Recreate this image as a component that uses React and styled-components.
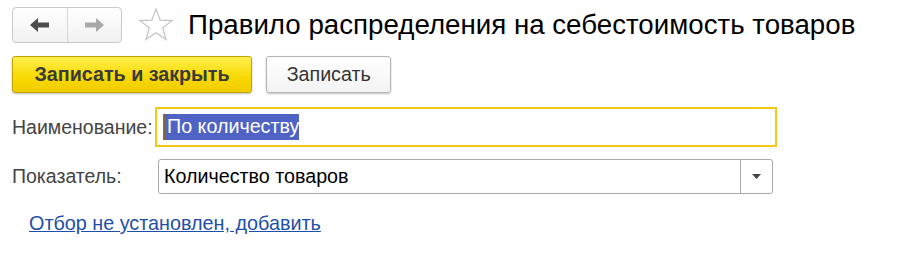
import React from "react";
import styled, { createGlobalStyle } from "styled-components";

const Global = createGlobalStyle`
  html, body { margin: 0; padding: 0; background: #fff; }
  body { font-family: "Liberation Sans", Arial, sans-serif; color: #333; }
`;

const Page = styled.div`
  width: 920px;
  height: 266px;
  box-sizing: border-box;
  padding: 7px 0 0 12px;
  display: flex;
  flex-direction: column;
`;

const Header = styled.div`
  display: flex;
  align-items: center;
  height: 36px;
`;

const NavGroup = styled.div`
  display: flex;
  width: 110px;
  height: 36px;
  box-sizing: border-box;
  border: 1px solid #c9c9c9;
  border-radius: 4px;
  background: linear-gradient(#ffffff, #f1f1f1);
  overflow: hidden;
`;

const NavBtn = styled.div`
  flex: 1;
  display: flex;
  align-items: center;
  justify-content: center;
  & + & { border-left: 1px solid #d6d6d6; }
`;

const Star = styled.div`
  width: 36px;
  height: 36px;
  margin-left: 16px;
  display: flex;
  align-items: center;
  justify-content: center;
`;

const Title = styled.h1`
  margin: 0 0 0 14px;
  font-weight: normal;
  font-size: 27.7px;
  color: #000;
  white-space: nowrap;
`;

const Toolbar = styled.div`
  display: flex;
  gap: 14px;
  margin-top: 13px;
`;

const Button = styled.div`
  height: 37px;
  box-sizing: border-box;
  padding: 0 ${(p) => (p.$primary ? "21.5px" : "19.5px")};
  display: flex;
  align-items: center;
  border-radius: 3px;
  font-size: 19.7px;
  font-weight: ${(p) => (p.$primary ? "bold" : "normal")};
  color: ${(p) => (p.$primary ? "#3a3a3a" : "#333")};
  border: 1px solid ${(p) => (p.$primary ? "#c2a200" : "#b5b5b5")};
  background: ${(p) =>
    p.$primary
      ? "linear-gradient(#fff04d, #f7d800 60%, #f0cc00)"
      : "linear-gradient(#ffffff, #f3f3f3)"};
  box-shadow: 0 1px 2px rgba(0, 0, 0, 0.25);
`;

const Row = styled.div`
  display: flex;
  align-items: center;
  margin-top: ${(p) => p.$mt}px;
`;

const Label = styled.div`
  width: ${(p) => p.$w}px;
  font-size: 19.5px;
  color: #444;
  white-space: nowrap;
`;

const NameInput = styled.div`
  width: 622px;
  height: 40px;
  box-sizing: border-box;
  border: 2px solid #f5c816;
  display: flex;
  align-items: center;
  padding-left: 6px;
  font-size: 19.7px;
`;

const Selected = styled.span`
  background: #4f63c4;
  color: #fff;
  padding: 1px 0 2px 2px;
  border-left: 2px solid #8a6a30;
`;

const Select = styled.div`
  width: 615px;
  height: 35px;
  box-sizing: border-box;
  border: 1px solid #a9a9a9;
  border-radius: 3px;
  display: flex;
  align-items: center;
  font-size: 19.7px;
  color: #000;
`;

const SelectText = styled.div`
  flex: 1;
  padding-left: 5px;
`;

const SelectBtn = styled.div`
  width: 31px;
  height: 100%;
  border-left: 1px solid #a9a9a9;
  display: flex;
  align-items: center;
  justify-content: center;
`;

const Link = styled.a`
  margin: 18px 0 0 17px;
  font-size: 19.8px;
  color: #1f4fa8;
  text-decoration: underline;
  align-self: flex-start;
`;

export default function App() {
  return (
    <>
      <Global />
      <Page>
        <Header>
          <NavGroup>
            <NavBtn>
              <svg width="20" height="14" viewBox="0 0 20 14">
                <path d="M0 7 L8 0 L8 4.5 L19 4.5 L19 9.5 L8 9.5 L8 14 Z" fill="#4d4d4d" />
              </svg>
            </NavBtn>
            <NavBtn>
              <svg width="20" height="14" viewBox="0 0 20 14">
                <path d="M20 7 L12 0 L12 4.5 L1 4.5 L1 9.5 L12 9.5 L12 14 Z" fill="#a8a8a8" />
              </svg>
            </NavBtn>
          </NavGroup>
          <Star>
            <svg width="36" height="36" viewBox="0 0 36 36">
              <path
                d="M18 2 L22.2 13.2 L34 13.6 L24.7 21 L28 32.5 L18 25.8 L8 32.5 L11.3 21 L2 13.6 L13.8 13.2 Z"
                fill="none"
                stroke="#c4c4c4"
                strokeWidth="1.2"
                strokeLinejoin="miter"
              />
            </svg>
          </Star>
          <Title>Правило распределения на себестоимость товаров</Title>
        </Header>
        <Toolbar>
          <Button $primary>Записать и закрыть</Button>
          <Button>Записать</Button>
        </Toolbar>
        <Row $mt={14}>
          <Label $w={143}>Наименование:</Label>
          <NameInput>
            <Selected>По количеству</Selected>
          </NameInput>
        </Row>
        <Row $mt={12}>
          <Label $w={146}>Показатель:</Label>
          <Select>
            <SelectText>Количество товаров</SelectText>
            <SelectBtn>
              <svg width="9" height="5" viewBox="0 0 9 5">
                <path d="M0 0 L9 0 L4.5 5 Z" fill="#444" />
              </svg>
            </SelectBtn>
          </Select>
        </Row>
        <Link>Отбор не установлен, добавить</Link>
      </Page>
    </>
  );
}
